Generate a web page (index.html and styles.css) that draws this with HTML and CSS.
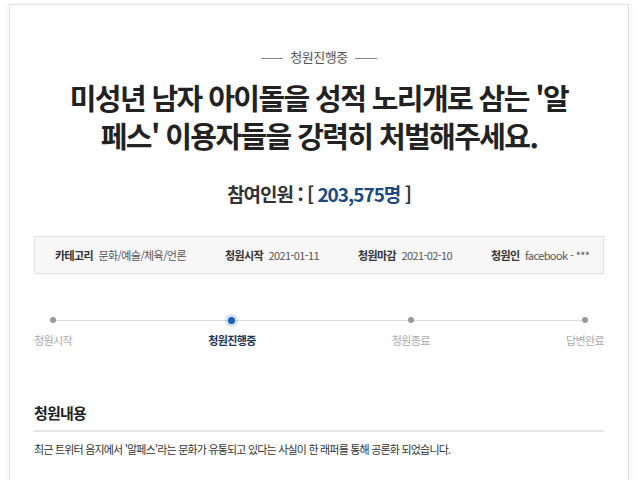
FILE: index.html
```html
<!DOCTYPE html>
<html lang="ko">

<head>
    <meta charset="UTF-8">
    <meta name="viewport" content="width=device-width, initial-scale=1.0">
    <title>청원진행중</title>
    <link rel="stylesheet" href="styles.css">
</head>

<body>
    <article class="petition">
        <p class="status"><span>청원진행중</span></p>
        <h2 class="title">미성년 남자 아이돌을 성적 노리개로 삼는 '알<br>페스' 이용자들을 강력히 처벌해주세요.</h2>
        <p class="count">참여인원 : [ <span class="num">203,575명</span> ]</p>

        <ul class="info">
            <li><b>카테고리</b> 문화/예술/체육/언론</li>
            <li><b>청원시작</b> 2021-01-11</li>
            <li><b>청원마감</b> 2021-02-10</li>
            <li><b>청원인</b> facebook - ***</li>
        </ul>

        <ol class="steps">
            <li>청원시작</li>
            <li class="on">청원진행중</li>
            <li>청원종료</li>
            <li>답변완료</li>
        </ol>

        <section class="content">
            <h3>청원내용</h3>
            <p>최근 트위터 음지에서 '알페스'라는 문화가 유통되고 있다는 사실이 한 래퍼를 통해 공론화 되었습니다.</p>
        </section>
    </article>
</body>

</html>
```

FILE: styles.css
```css
body {
    margin: 0;
    background: #fff;
    font-family: "Noto Sans CJK KR", "Noto Sans", sans-serif;
    color: #333;
}

.petition {
    width: 570px;
    margin: 4px 0 0 9px;
    padding: 0 24px;
    min-height: 480px;
    border: 1px solid #e4e4e4;
    border-bottom: 0;
    box-shadow: -3px 0 4px rgba(0, 0, 0, 0.04), 3px 0 4px rgba(0, 0, 0, 0.04);
}

.status {
    margin: 44px 0 0;
    text-align: center;
    font-size: 13px;
    line-height: 16px;
    color: #555;
    letter-spacing: -0.5px;
}

.status span::before,
.status span::after {
    content: "";
    display: inline-block;
    width: 22px;
    height: 1px;
    background: #888;
    vertical-align: middle;
    margin: 0 7px;
}

.title {
    margin: 13px 0 0;
    text-align: center;
    font-size: 29px;
    line-height: 38px;
    font-weight: 700;
    letter-spacing: -1.6px;
    color: #222;
}

.count {
    margin: 27px 0 0;
    text-align: center;
    font-size: 19px;
    line-height: 26px;
    font-weight: 700;
    letter-spacing: -1px;
    color: #333;
}

.count .num {
    color: #1b4a80;
}

.info {
    display: flex;
    gap: 39px;
    margin: 29px 0 0;
    padding: 0 0 0 20px;
    height: 36px;
    align-items: center;
    list-style: none;
    background: #f7f7f7;
    border: 1px solid #e2e2e2;
    box-shadow: 0 1px 2px rgba(0, 0, 0, 0.05);
    font-size: 11px;
    letter-spacing: -0.6px;
    color: #555;
}

.info b {
    color: #333;
    margin-right: 3px;
}

.steps {
    position: relative;
    display: flex;
    justify-content: space-between;
    margin: 43px 0 0;
    padding: 0;
    list-style: none;
    font-size: 11px;
    letter-spacing: -0.6px;
    color: #aaa;
}

.steps::before {
    content: "";
    position: absolute;
    left: 18px;
    right: 18px;
    top: 3px;
    height: 1px;
    background: #ddd;
}

.steps li {
    position: relative;
    display: flex;
    flex-direction: column;
    align-items: center;
}

.steps li::before {
    content: "";
    width: 6px;
    height: 6px;
    border-radius: 50%;
    background: #999;
    margin-bottom: 9px;
}

.steps li.on {
    color: #1d3557;
    font-weight: 700;
}

.steps li.on::before {
    width: 7px;
    height: 7px;
    margin-bottom: 8px;
    background: #1a5fb4;
    box-shadow: 0 0 0 3px rgba(26, 95, 180, 0.18);
}

.content {
    margin-top: 54px;
}

.content h3 {
    margin: 0;
    padding-bottom: 6px;
    border-bottom: 2px solid #e6e6e6;
    font-size: 15px;
    line-height: 22px;
    letter-spacing: -0.8px;
    color: #222;
}

.content p {
    margin: 8px 0 0;
    font-size: 11px;
    line-height: 18px;
    letter-spacing: -0.8px;
    color: #333;
}
```
